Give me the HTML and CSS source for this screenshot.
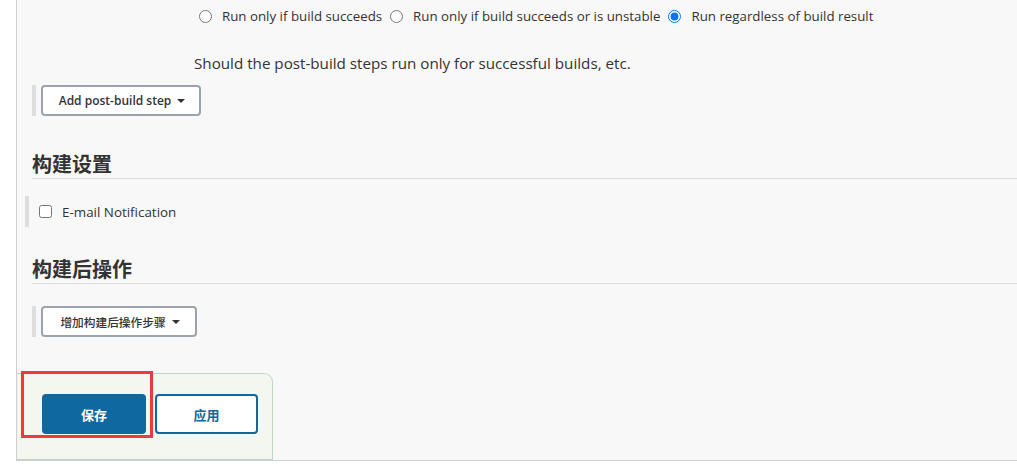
FILE: index.html
```html
<!DOCTYPE html>
<html lang="zh">
<head>
<meta charset="utf-8">
<title>Config</title>
<link rel="stylesheet" href="styles.css">
</head>
<body>
<div class="panel">
  <div class="radios">
    <label class="radio"><input type="radio" name="when"><span>Run only if build succeeds</span></label>
    <label class="radio"><input type="radio" name="when"><span>Run only if build succeeds or is unstable</span></label>
    <label class="radio"><input type="radio" name="when" checked><span>Run regardless of build result</span></label>
  </div>
  <div class="desc">Should the post-build steps run only for successful builds, etc.</div>
  <div class="btn-row first">
    <span class="bar"></span>
    <button class="dd-btn dd-en">Add post-build step<span class="caret"></span></button>
  </div>

  <h2 class="section">构建设置</h2>
  <div class="check-row">
    <span class="bar"></span>
    <label class="check"><input type="checkbox"><span>E-mail Notification</span></label>
  </div>

  <h2 class="section second">构建后操作</h2>
  <div class="btn-row zh-row">
    <span class="bar"></span>
    <button class="dd-btn dd-zh">增加构建后操作步骤<span class="caret"></span></button>
  </div>

  <div class="actions">
    <button class="save">保存</button>
    <button class="apply">应用</button>
    <div class="mark"></div>
  </div>
</div>
</body>
</html>
```

FILE: styles.css
```css
* { box-sizing: border-box; }
html, body { margin: 0; padding: 0; background: #fff; }
body {
  font-family: "Open Sans", "Noto Sans", "Noto Sans CJK SC", sans-serif;
  color: #333;
}
.panel {
  margin-left: 16px;
  width: 1001px;
  height: 461px;
  background: #f8f8f8;
  border-left: 1px solid #cfcfcf;
  border-bottom: 1px solid #cfcfcf;
  display: flex;
  flex-direction: column;
}
.radios {
  display: flex;
  align-items: center;
  padding-left: 182px;
  padding-top: 8px;
  height: 25px;
  font-size: 13.3px;
  line-height: 17px;
}
.radio {
  display: flex;
  align-items: center;
  margin-right: 8px;
}
.radio input {
  margin: 0 10px 0 0;
  width: 13px;
  height: 13px;
}
.desc {
  margin-top: 27px;
  padding-left: 177px;
  font-size: 15.2px;
  line-height: 22px;
}
.btn-row {
  display: flex;
  align-items: stretch;
  height: 31px;
  padding-left: 15px;
  margin-top: 11px;
}
.btn-row.zh-row { margin-top: 22px; }
.bar {
  width: 4px;
  background: #dedede;
  margin-right: 5px;
}
.dd-btn {
  background: #fff;
  border: 2px solid #9aa4ae;
  border-radius: 4px;
  font-family: "Open Sans", "Noto Sans CJK SC", sans-serif;
  font-weight: 600;
  font-size: 12px;
  color: #333;
  display: flex;
  align-items: center;
  justify-content: center;
  padding: 0;
  margin: 0;
}
.dd-en { width: 160px; padding-left: 2px; }
.dd-zh { width: 156px; padding-left: 2px; font-weight: 500; font-size: 11.7px; }
.caret {
  display: inline-block;
  width: 0;
  height: 0;
  border-left: 4px solid transparent;
  border-right: 4px solid transparent;
  border-top: 4px solid #333;
  margin-left: 6px;
}
.section {
  margin: 36px 0 0 15px;
  padding-bottom: 2px;
  font-family: "Noto Sans CJK SC", sans-serif;
  font-size: 20px;
  font-weight: 700;
  line-height: 24px;
  border-bottom: 1px solid #dcdcdc;
}
.section.second { margin-top: 30px; }
.check-row {
  display: flex;
  align-items: stretch;
  height: 31px;
  margin-top: 17px;
  padding-left: 8px;
}
.check-row .bar { margin-right: 9px; }
.check {
  display: flex;
  align-items: center;
  font-size: 13.4px;
}
.check input {
  margin: 0 10px 0 1px;
  width: 13px;
  height: 13px;
}
.actions {
  position: relative;
  margin-top: 36px;
  width: 256px;
  height: 87px;
  flex-shrink: 0;
  background: #f4f7f0;
  border: 1px solid #bfd6c5;
  border-left: none;
  border-top-right-radius: 9px;
  display: flex;
  align-items: flex-start;
  padding: 20px 0 0 25px;
  gap: 9px;
}
.save, .apply {
  font-family: "Noto Sans CJK SC", sans-serif;
  font-weight: 700;
  font-size: 13px;
  border-radius: 4px;
  margin: 0;
  padding: 0;
}
.save {
  width: 104px;
  height: 40px;
  background: #0e69a1;
  color: #fff;
  border: none;
}
.apply {
  width: 103px;
  height: 40px;
  background: #fff;
  color: #0e69a1;
  border: 2px solid #0e69a1;
}
.mark {
  position: absolute;
  left: 4px;
  top: -3px;
  width: 132px;
  height: 67px;
  border: 3px solid #ef3a3a;
}
```
